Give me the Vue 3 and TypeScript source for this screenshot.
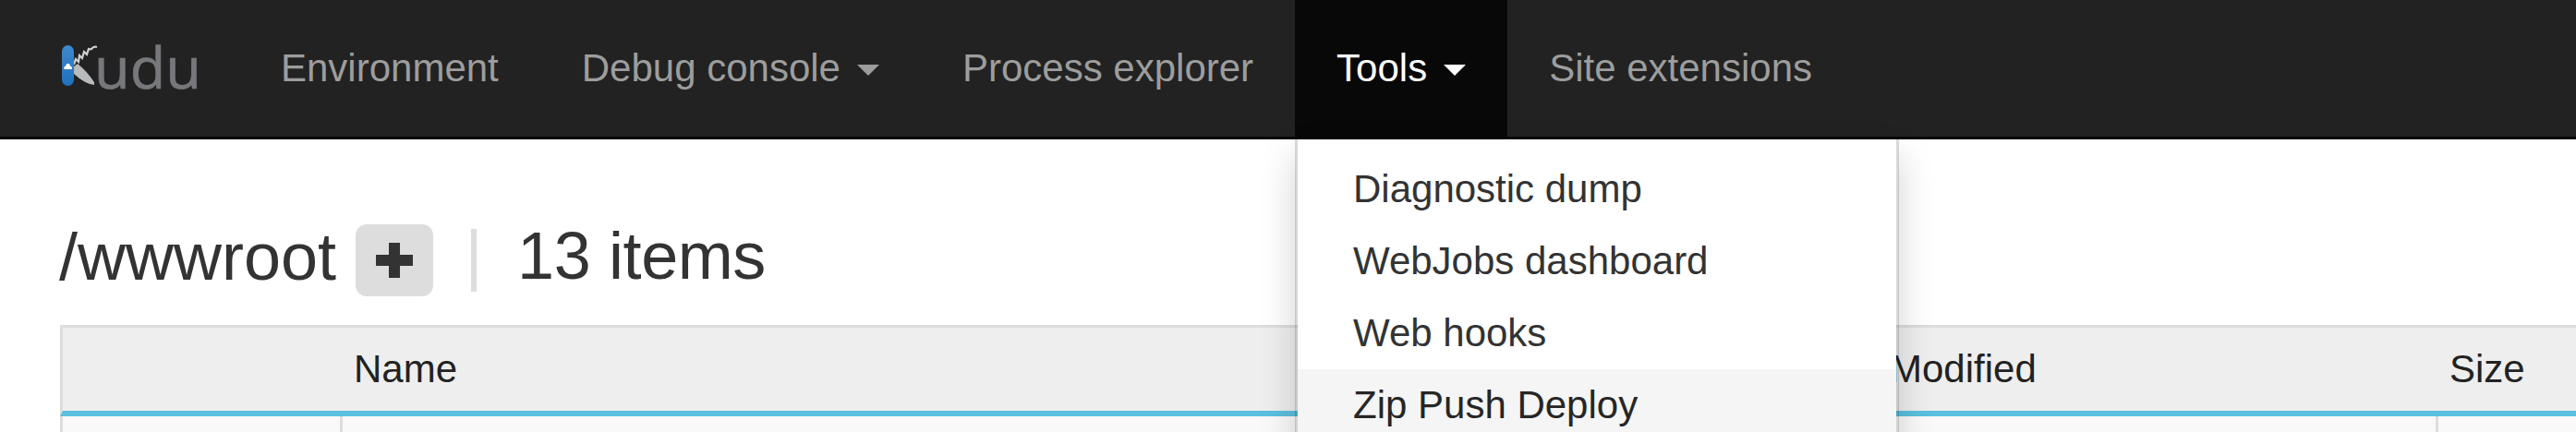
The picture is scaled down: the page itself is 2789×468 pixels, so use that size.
<template>
  <div class="page">
    <header class="navbar">
      <a class="brand" href="#">
        <svg class="brand-mark" width="65" height="55" viewBox="0 0 65 55">
          <defs>
            <linearGradient id="pill" x1="0" y1="0" x2="0" y2="1">
              <stop offset="0" stop-color="#3f88ca" />
              <stop offset="1" stop-color="#1e71be" />
            </linearGradient>
          </defs>
          <path d="M20 27 L24 24 Q34 32 42 44 L42 47 Q32 46 20 35 Z" fill="#b9babb" />
          <path d="M20 25 L22 19 L25 22 L26 15 L29 18 L31 11 L34 14 L36 8 Q39 9 40 7 Q42 5 45 6" fill="none" stroke="#d2d2d2" stroke-width="2.2" />
          <rect x="7" y="4" width="13" height="44" rx="6.5" fill="url(#pill)" />
          <path d="M9.5 30 Q8.5 27 11 26.5 Q12 23 14.5 24 Q16 24.5 16 26.5 Q18.5 27 18 30 Z" fill="#fff" />
        </svg>
        <span class="brand-text">udu</span>
      </a>
      <nav class="nav">
        <a v-for="item in navItems" :key="item.label" class="nav-link" :class="{ active: item.active }" href="#">
          {{ item.label }}<span v-if="item.caret" class="caret"></span>
        </a>
        <ul class="dropdown">
          <li v-for="entry in toolEntries" :key="entry" class="dropdown-item" :class="{ hover: entry === 'Zip Push Deploy' }">{{ entry }}</li>
        </ul>
      </nav>
    </header>
    <main class="content">
      <div class="heading">
        <span>/wwwroot</span>
        <button class="add-btn" type="button" aria-label="Add">
          <svg width="40" height="38" viewBox="0 0 40 38"><path d="M14 0h12v13h14v12H26v13H14V25H0V13h14z" fill="#333" /></svg>
        </button>
        <span class="divider"></span>
        <span class="count">13 items</span>
      </div>
      <table class="files">
        <colgroup>
          <col class="col-icon" />
          <col class="col-name" />
          <col class="col-modified" />
          <col class="col-size" />
        </colgroup>
        <thead>
          <tr>
            <th></th>
            <th>Name</th>
            <th>Modified</th>
            <th>Size</th>
          </tr>
        </thead>
        <tbody>
          <tr>
            <td></td>
            <td></td>
            <td></td>
            <td></td>
          </tr>
        </tbody>
      </table>
    </main>
  </div>
</template>

<script setup lang="ts">
interface NavItem {
  label: string;
  caret?: boolean;
  active?: boolean;
}

const navItems: NavItem[] = [
  { label: "Environment" },
  { label: "Debug console", caret: true },
  { label: "Process explorer" },
  { label: "Tools", caret: true, active: true },
  { label: "Site extensions" },
];

const toolEntries = ["Diagnostic dump", "WebJobs dashboard", "Web hooks", "Zip Push Deploy"];
</script>

<style>
html,
body {
  margin: 0;
  overflow: hidden;
  background: #fff;
}
</style>

<style scoped>
.page {
  width: 2789px;
  height: 468px;
  overflow: hidden;
  font-family: "Liberation Sans", Arial, sans-serif;
  font-size: 42px;
  color: #333;
}

.navbar {
  display: flex;
  height: 148px;
  background: #222;
  border-bottom: 3px solid #080808;
}

.brand {
  display: flex;
  align-items: center;
  width: 259px;
  padding-left: 60px;
  box-sizing: border-box;
  text-decoration: none;
}

.brand-mark {
  flex: none;
  margin-top: -3px;
}

.brand-text {
  margin-left: -23px;
  margin-top: -5px;
  font-family: "Open Sans", sans-serif;
  font-size: 63px;
  line-height: 1;
  color: #77787b;
  -webkit-text-stroke: 0.7px #77787b;
}

.nav {
  position: relative;
  display: flex;
}

.nav-link {
  display: flex;
  align-items: center;
  padding: 0 45px;
  color: #9d9d9d;
  text-decoration: none;
  white-space: pre;
}

.nav-link.active {
  background: #080808;
  color: #fff;
}

.caret {
  width: 0;
  height: 0;
  margin-left: 18px;
  margin-top: 3px;
  border-top: 12px solid currentColor;
  border-left: 12px solid transparent;
  border-right: 12px solid transparent;
}

.dropdown {
  position: absolute;
  top: 151px;
  left: 1143px;
  z-index: 2;
  width: 648px;
  margin: 0;
  padding: 15px 0;
  list-style: none;
  background: #fff;
  background-clip: padding-box;
  border: solid rgba(0, 0, 0, 0.15);
  border-width: 0 3px 3px;
  box-shadow: 0 18px 36px rgba(0, 0, 0, 0.175);
}

.dropdown-item {
  height: 78px;
  padding: 0 60px;
  line-height: 78px;
  color: #333;
}

.dropdown-item.hover {
  background: #f5f5f5;
  color: #262626;
}

.content {
  padding: 0 0 0 65px;
}

.heading {
  display: flex;
  align-items: center;
  box-sizing: border-box;
  height: 201px;
  padding-top: 52px;
  margin-left: -1px;
  font-size: 72px;
  line-height: 1;
}

.count {
  margin-top: -2px;
  letter-spacing: -0.4px;
}

.add-btn {
  display: flex;
  align-items: center;
  justify-content: center;
  width: 84px;
  height: 78px;
  margin: 8px 0 0 21px;
  padding: 0;
  border: 0;
  border-radius: 12px;
  background: #ddd;
}

.divider {
  width: 6px;
  height: 68px;
  margin: 8px 44px 0 41px;
  background: #ddd;
}

.files {
  width: 2800px;
  table-layout: fixed;
  border-collapse: separate;
  border-spacing: 0;
  background: #f9f9f9;
  color: #222;
}

.col-icon {
  width: 306px;
}

.col-name {
  width: 1663px;
}

.col-modified {
  width: 606px;
}

.col-size {
  width: 225px;
}

th {
  height: 90px;
  padding: 0 12px;
  border-top: 3px solid #ddd;
  border-bottom: 6px solid #5bc0de;
  background: #eee;
  font-weight: 400;
  text-align: left;
}

th:first-child,
td:first-child {
  border-left: 3px solid #ddd;
}

td {
  height: 60px;
  border-right: 3px solid #ddd;
}
</style>
